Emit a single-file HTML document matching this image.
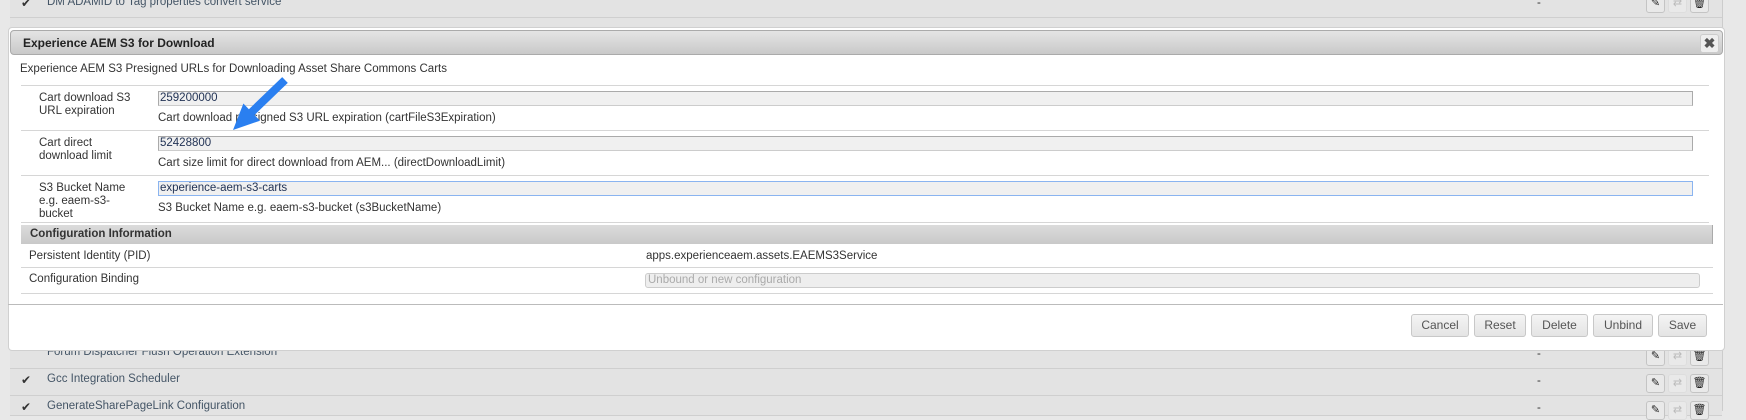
<!DOCTYPE html>
<html><head><style>
*{box-sizing:border-box;margin:0;padding:0}
body{width:1746px;height:411px;overflow:hidden;background:#e8e8e8;font-family:"Liberation Sans",sans-serif;font-size:11.5px;color:#333;position:relative}
.abs{position:absolute}
.row{position:absolute;left:10px;width:1712px;background:#e3e3e3;border-bottom:1px solid #cfcfcf}
.ico{position:absolute;width:19px;height:19px;border:1px solid #c4c4c4;border-radius:3px;background:#e9e9e9;font-size:11px;text-align:center;line-height:17px;color:#222}
.dlg{position:absolute;left:8px;top:27px;width:1717px;height:324px;background:#fff;border:1px solid #d0d0d0;border-radius:4px}
.hdr{position:absolute;left:1px;top:2px;width:1713px;height:25px;background:linear-gradient(#e4e4e4,#c9c9c9);border:1px solid #aaa;border-radius:4px;font-weight:bold;font-size:12px;color:#222;padding:5px 0 0 12px}
.sep{position:absolute;left:21px;width:1688px;height:1px;background:#d6d6d6}
.ta{position:absolute;left:158px;width:1535px;height:15px;background:#f0f0f0;border:1px solid #aaa;border-bottom-color:#ccc;color:#235;padding:0 1px;line-height:13px}
.lbl{position:absolute;left:39px;line-height:13px}
.help{position:absolute;left:158px}
.btn{position:absolute;top:314px;height:23px;border:1px solid #c8c8c8;border-radius:3px;background:linear-gradient(#f4f4f4,#e4e4e4);color:#555;font-size:12px;text-align:center;line-height:21px}
</style></head><body>
<div class="abs" style="left:1722px;top:0;width:1px;height:411px;background:#ccc"></div>
<div class="abs" style="left:10px;top:0;width:1px;height:411px;background:#d0d0d0"></div>
<div class="row" style="top:-10px;height:28px"></div>
<div class="abs" style="left:21px;top:-4px;font-size:12px">✔</div>
<div class="abs" style="left:47px;top:-4px;color:#456">DM ADAMID to Tag properties convert service</div>
<div class="row" style="top:18px;height:12px"></div>
<div class="row" style="top:340px;height:29px"></div>
<div class="abs" style="left:47px;top:346px;color:#456">Forum Dispatcher Flush Operation Extension</div>
<div class="row" style="top:369px;height:27px"></div>
<div class="abs" style="left:21px;top:373px;font-size:12px">✔</div>
<div class="abs" style="left:47px;top:373px;color:#456">Gcc Integration Scheduler</div>
<div class="row" style="top:396px;height:20px"></div>
<div class="abs" style="left:21px;top:400px;font-size:12px">✔</div>
<div class="abs" style="left:47px;top:400px;color:#456">GenerateSharePageLink Configuration</div>
<div class="abs" style="left:1537px;top:-3px">-</div>
<div class="abs" style="left:1537px;top:348px">-</div>
<div class="abs" style="left:1537px;top:375px">-</div>
<div class="abs" style="left:1537px;top:402px">-</div>
<div class="ico" style="left:1646px;top:-6px">✎</div><div class="ico" style="left:1668px;top:-6px;border-color:#ddd;color:#bbb">⇄</div><div class="ico" style="left:1690px;top:-6px">🗑</div>
<div class="ico" style="left:1646px;top:347px">✎</div><div class="ico" style="left:1668px;top:347px;border-color:#ddd;color:#bbb">⇄</div><div class="ico" style="left:1690px;top:347px">🗑</div>
<div class="ico" style="left:1646px;top:374px">✎</div><div class="ico" style="left:1668px;top:374px;border-color:#ddd;color:#bbb">⇄</div><div class="ico" style="left:1690px;top:374px">🗑</div>
<div class="ico" style="left:1646px;top:401px">✎</div><div class="ico" style="left:1668px;top:401px;border-color:#ddd;color:#bbb">⇄</div><div class="ico" style="left:1690px;top:401px">🗑</div>

<div class="dlg">
<div class="hdr">Experience AEM S3 for Download</div>
<div class="abs" style="left:1691px;top:6px;width:19px;height:19px;background:#eee;border:1px solid #ccc;border-radius:3px;font-weight:bold;text-align:center;font-size:14px;line-height:17px;color:#555">✖</div>
</div>
<div class="abs" style="left:20px;top:63px">Experience AEM S3 Presigned URLs for Downloading Asset Share Commons Carts</div>
<div class="sep" style="top:85px"></div>
<div class="lbl" style="top:92px">Cart download S3<br>URL expiration</div>
<div class="ta" style="top:91px">259200000</div>
<div class="help" style="top:112px">Cart download presigned S3 URL expiration (cartFileS3Expiration)</div>
<div class="sep" style="top:130px"></div>
<div class="lbl" style="top:137px">Cart direct<br>download limit</div>
<div class="ta" style="top:136px">52428800</div>
<div class="help" style="top:157px">Cart size limit for direct download from AEM... (directDownloadLimit)</div>
<div class="sep" style="top:175px"></div>
<div class="lbl" style="top:182px">S3 Bucket Name<br>e.g. eaem-s3-<br>bucket</div>
<div class="ta" style="top:181px;border:1px solid #8ab4f0">experience-aem-s3-carts</div>
<div class="help" style="top:202px">S3 Bucket Name e.g. eaem-s3-bucket (s3BucketName)</div>
<div class="sep" style="top:222px"></div>
<div class="abs" style="left:21px;top:225px;width:1692px;height:19px;background:linear-gradient(#dcdcdc,#c9c9c9);border-right:1px solid #aaa;font-weight:bold;padding:3px 0 0 9px;color:#333">Configuration Information</div>
<div class="abs" style="left:29px;top:250px">Persistent Identity (PID)</div>
<div class="abs" style="left:646px;top:250px">apps.experienceaem.assets.EAEMS3Service</div>
<div class="sep" style="top:267px;left:21px;width:1692px"></div>
<div class="abs" style="left:29px;top:273px">Configuration Binding</div>
<div class="abs" style="left:645px;top:273px;width:1055px;height:15px;background:#eee;border:1px solid #ccc;border-radius:3px;color:#aaa;padding-left:2px;line-height:13px">Unbound or new configuration</div>
<div class="sep" style="top:293px;left:21px;width:1692px"></div>
<div class="abs" style="left:8px;top:304px;width:1715px;height:1px;background:#bbb"></div>
<div class="btn" style="left:1411px;width:58px">Cancel</div>
<div class="btn" style="left:1474px;width:52px">Reset</div>
<div class="btn" style="left:1531px;width:57px">Delete</div>
<div class="btn" style="left:1593px;width:60px">Unbind</div>
<div class="btn" style="left:1658px;width:49px">Save</div>
<svg class="abs" style="left:0;top:0" width="1746" height="411"><polygon points="287.8,82.9 254.5,115 260,120.7 233,130 243.4,103.5 248.9,109.2 282.2,77.1" fill="#2a7ff0"/></svg>
</body></html>
